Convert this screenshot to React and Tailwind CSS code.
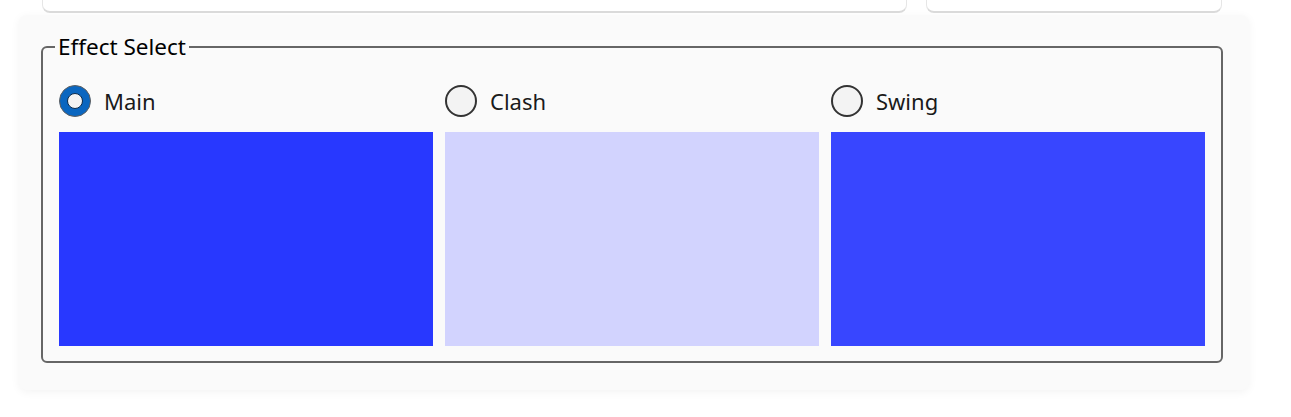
import React, { useState } from "react";

const effects = [
  { id: "main", label: "Main", color: "bg-[#2838ff]" },
  { id: "clash", label: "Clash", color: "bg-[#d2d3fe]" },
  { id: "swing", label: "Swing", color: "bg-[#3846ff]" },
];

const Radio = ({ checked }) =>
  checked ? (
    <span className="flex h-[32px] w-[32px] items-center justify-center rounded-full border border-[#5f5f5f] bg-[#0a66c0]">
      <span className="h-[16px] w-[16px] rounded-full border border-[#0b2a4a] bg-[#f3f3f3]" />
    </span>
  ) : (
    <span className="h-[32px] w-[32px] rounded-full border-2 border-[#333] bg-[#f3f3f3]" />
  );

const App = () => {
  const [selected, setSelected] = useState("main");

  return (
    <div className="h-[417px] w-full overflow-hidden bg-white font-['Segoe_UI','Noto_Sans',sans-serif] text-[#1a1a1a]">
      {/* cards of the section above, cut off by the window */}
      <div className="-mt-[27px] flex gap-[19px] pl-[42px]">
        <div className="h-[40px] w-[865px] rounded-lg border border-[#e6e6e6] border-b-2 border-b-[#dadada] bg-white" />
        <div className="h-[40px] w-[296px] rounded-lg border border-[#e6e6e6] border-b-2 border-b-[#dadada] bg-white" />
      </div>

      <div className="ml-[19px] mt-[2px] h-[375px] w-[1230px] rounded-lg bg-[#fafafa] pl-[22px] pt-[19px] shadow-[0_2px_10px_rgba(0,0,0,0.05)]">
        <fieldset className="w-[1182px] rounded-md border-2 border-[#666] px-4 pb-[15px]">
          <legend className="-ml-[4px] px-[3px] text-[22.5px] leading-[26px] text-black">
            Effect Select
          </legend>
          <div className="grid grid-cols-3 gap-3 pt-[10px]">
            {effects.map((e) => (
              <div key={e.id} className="flex flex-col">
                <button
                  type="button"
                  onClick={() => setSelected(e.id)}
                  className="flex h-[62px] items-center gap-[13px] pb-[1px] text-left"
                >
                  <Radio checked={selected === e.id} />
                  <span className="text-[22px] leading-none">{e.label}</span>
                </button>
                <div className={`h-[214px] w-full ${e.color}`} />
              </div>
            ))}
          </div>
        </fieldset>
      </div>
    </div>
  );
};

export default App;
